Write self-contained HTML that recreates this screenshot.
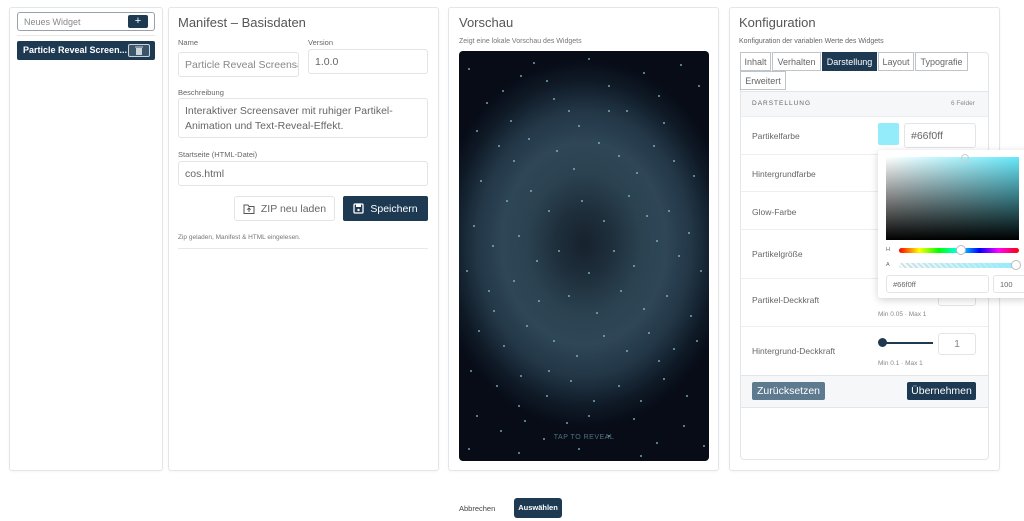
<!DOCTYPE html>
<html><head><meta charset="utf-8"><style>
*{box-sizing:border-box;margin:0;padding:0}
body{width:1024px;height:521px;background:#fff;font-family:"Liberation Sans",sans-serif;position:relative;overflow:hidden;color:#555}
.abs{position:absolute}
.panel{position:absolute;border:1px solid #e3e5e8;border-radius:3px;background:#fff;box-shadow:0 1px 2px rgba(0,0,0,.04)}
.h{font-size:13px;color:#555}
.lbl{font-size:7.5px;color:#666}
.inp{position:absolute;border:1px solid #e2e4e7;border-radius:3px;background:#fff;font-size:10.5px;color:#666;padding:0 6px;display:flex;align-items:center}
.dark{background:#1e3a53;color:#fff}
.tab{position:absolute;border:1px solid #bfc4c9;font-size:9px;color:#666;display:flex;align-items:center;justify-content:center;height:19px;background:#fff}
.row{position:absolute;left:741px;width:247px;border-top:1px solid #eceef0;font-size:8.5px;color:#666}
</style></head><body>

<!-- left panel -->
<div class="panel" style="left:9px;top:7px;width:154px;height:464px"></div>
<div class="inp" style="left:17px;top:12px;width:138px;height:19px;border-color:#9aa1a8;font-size:9px;color:#888">Neues Widget</div>
<div class="abs dark" style="left:128px;top:15px;width:20px;height:13px;border-radius:2px;font-size:11px;line-height:13px;text-align:center">+</div>
<div class="abs" style="left:17px;top:35px;width:138px;height:1px;background:#e6e8ea"></div>
<div class="abs dark" style="left:17px;top:41px;width:138px;height:19px;border-radius:2px;font-size:9px;font-weight:bold;line-height:19px;padding-left:6px">Particle Reveal Screen...</div>
<div class="abs" style="left:128px;top:44px;width:22px;height:13px;border:1px solid #c9d3dc;border-radius:2px;background:#3c5569;display:flex;align-items:center;justify-content:center"><svg width="8" height="9" viewBox="0 0 8 9" style="display:block"><rect x="1" y="2" width="6" height="7" fill="#c9d3dc"/><rect x="0" y="0.5" width="8" height="1" fill="#c9d3dc"/></svg></div>

<!-- manifest panel -->
<div class="panel" style="left:168px;top:7px;width:271px;height:464px"></div>
<div class="abs h" style="left:178px;top:15px">Manifest – Basisdaten</div>
<div class="abs lbl" style="left:178px;top:38px">Name</div>
<div class="abs lbl" style="left:308px;top:38px">Version</div>
<div class="inp" style="left:178px;top:52px;width:121px;height:25px;color:#888;overflow:hidden;white-space:nowrap">Particle Reveal Screensa</div>
<div class="inp" style="left:308px;top:49px;width:120px;height:25px">1.0.0</div>
<div class="abs lbl" style="left:178px;top:88px">Beschreibung</div>
<div class="inp" style="left:178px;top:98px;width:250px;height:40px;align-items:flex-start;padding-top:5px;line-height:15px">Interaktiver Screensaver mit ruhiger Partikel-Animation und Text-Reveal-Effekt.</div>
<div class="abs lbl" style="left:178px;top:150px">Startseite (HTML-Datei)</div>
<div class="inp" style="left:178px;top:161px;width:250px;height:25px">cos.html</div>
<div class="inp" style="left:234px;top:196px;width:101px;height:25px;justify-content:center;gap:6px;color:#666"><svg width="12" height="10" viewBox="0 0 12 10"><path d="M1 1h4l1 1.5h5v7H1z" fill="none" stroke="#555"/><path d="M6 8V4M4.3 5.7L6 4l1.7 1.7" fill="none" stroke="#555"/></svg>ZIP neu laden</div>
<div class="abs dark" style="left:343px;top:196px;width:85px;height:25px;border-radius:2px;font-size:10.5px;display:flex;align-items:center;justify-content:center;gap:6px"><svg width="11" height="11" viewBox="0 0 11 11"><rect x="1" y="1" width="9" height="9" rx="1" fill="none" stroke="#fff" stroke-width="1.3"/><rect x="3" y="1" width="5" height="3" fill="#fff"/><circle cx="5.5" cy="7" r="1.2" fill="#fff"/></svg>Speichern</div>
<div class="abs" style="left:178px;top:234px;font-size:6.5px;color:#777">Zip geladen, Manifest &amp; HTML eingelesen.</div>
<div class="abs" style="left:178px;top:248px;width:250px;height:1px;background:#e6e8ea"></div>

<!-- preview panel -->
<div class="panel" style="left:448px;top:7px;width:271px;height:464px"></div>
<div class="abs h" style="left:459px;top:15px">Vorschau</div>
<div class="abs" style="left:459px;top:38px;font-size:7px;color:#777">Zeigt eine lokale Vorschau des Widgets</div>
<div class="abs" style="left:459px;top:51px;width:250px;height:410px;border-radius:4px;overflow:hidden;background:radial-gradient(ellipse 150px 185px at 50% 47%,#16222e 0%,#1e2e3b 18%,#2b4251 38%,#2e4656 55%,#223646 72%,#0f1a26 88%,#070c17 100%)">
<svg width="250" height="410" style="position:absolute;left:0;top:0" fill="#8fcfd8">
<g>
<circle cx="10" cy="18" r=".9"/><circle cx="28" cy="52" r=".9"/><circle cx="44" cy="40" r=".9"/><circle cx="62" cy="25" r=".9"/><circle cx="75" cy="12" r=".9"/><circle cx="88" cy="30" r=".9"/><circle cx="95" cy="48" r=".9"/><circle cx="110" cy="60" r=".9"/><circle cx="130" cy="8" r=".9"/><circle cx="150" cy="35" r=".9"/><circle cx="168" cy="60" r=".9"/><circle cx="185" cy="22" r=".9"/><circle cx="200" cy="45" r=".9"/><circle cx="222" cy="14" r=".9"/><circle cx="240" cy="35" r=".9"/><circle cx="18" cy="80" r=".9"/><circle cx="40" cy="95" r=".9"/><circle cx="55" cy="110" r=".9"/><circle cx="70" cy="88" r=".9"/><circle cx="98" cy="100" r=".9"/><circle cx="115" cy="118" r=".9"/><circle cx="140" cy="92" r=".9"/><circle cx="160" cy="105" r=".9"/><circle cx="178" cy="122" r=".9"/><circle cx="195" cy="95" r=".9"/><circle cx="215" cy="110" r=".9"/><circle cx="235" cy="125" r=".9"/><circle cx="22" cy="130" r=".9"/><circle cx="48" cy="150" r=".9"/><circle cx="72" cy="140" r=".9"/><circle cx="90" cy="160" r=".9"/><circle cx="123" cy="150" r=".9"/><circle cx="145" cy="170" r=".9"/><circle cx="170" cy="145" r=".9"/><circle cx="188" cy="165" r=".9"/><circle cx="210" cy="160" r=".9"/><circle cx="230" cy="182" r=".9"/><circle cx="15" cy="175" r=".9"/><circle cx="34" cy="195" r=".9"/><circle cx="60" cy="185" r=".9"/><circle cx="78" cy="210" r=".9"/><circle cx="100" cy="200" r=".9"/><circle cx="130" cy="222" r=".9"/><circle cx="155" cy="200" r=".9"/><circle cx="175" cy="215" r=".9"/><circle cx="198" cy="190" r=".9"/><circle cx="220" cy="205" r=".9"/><circle cx="242" cy="220" r=".9"/><circle cx="8" cy="220" r=".9"/><circle cx="30" cy="240" r=".9"/><circle cx="55" cy="230" r=".9"/><circle cx="80" cy="250" r=".9"/><circle cx="110" cy="245" r=".9"/><circle cx="138" cy="262" r=".9"/><circle cx="162" cy="240" r=".9"/><circle cx="185" cy="258" r=".9"/><circle cx="208" cy="245" r=".9"/><circle cx="232" cy="265" r=".9"/><circle cx="20" cy="280" r=".9"/><circle cx="45" cy="295" r=".9"/><circle cx="68" cy="275" r=".9"/><circle cx="95" cy="290" r=".9"/><circle cx="118" cy="305" r=".9"/><circle cx="145" cy="285" r=".9"/><circle cx="168" cy="300" r=".9"/><circle cx="190" cy="282" r=".9"/><circle cx="215" cy="298" r=".9"/><circle cx="238" cy="290" r=".9"/><circle cx="12" cy="320" r=".9"/><circle cx="38" cy="335" r=".9"/><circle cx="62" cy="325" r=".9"/><circle cx="88" cy="345" r=".9"/><circle cx="112" cy="330" r=".9"/><circle cx="135" cy="350" r=".9"/><circle cx="160" cy="335" r=".9"/><circle cx="182" cy="350" r=".9"/><circle cx="205" cy="328" r=".9"/><circle cx="228" cy="345" r=".9"/><circle cx="18" cy="365" r=".9"/><circle cx="42" cy="380" r=".9"/><circle cx="66" cy="370" r=".9"/><circle cx="85" cy="388" r=".9"/><circle cx="108" cy="372" r=".9"/><circle cx="150" cy="385" r=".9"/><circle cx="175" cy="368" r=".9"/><circle cx="198" cy="392" r=".9"/><circle cx="225" cy="375" r=".9"/><circle cx="10" cy="398" r=".9"/><circle cx="60" cy="402" r=".9"/><circle cx="120" cy="398" r=".9"/><circle cx="182" cy="405" r=".9"/><circle cx="245" cy="395" r=".9"/>
<circle cx="52" cy="70" r=".9"/><circle cx="120" cy="75" r=".9"/><circle cx="205" cy="72" r=".9"/><circle cx="35" cy="260" r=".9"/><circle cx="90" cy="320" r=".9"/><circle cx="200" cy="310" r=".9"/><circle cx="150" cy="60" r=".9"/><circle cx="60" cy="355" r=".9"/><circle cx="130" cy="365" r=".9"/>
</g></svg>
<div class="abs" style="left:0;width:250px;top:383px;text-align:center;font-size:7px;letter-spacing:.5px;color:#4d7080">TAP TO REVEAL</div>
</div>

<!-- config panel -->
<div class="panel" style="left:729px;top:7px;width:271px;height:464px"></div>
<div class="abs h" style="left:739px;top:15px">Konfiguration</div>
<div class="abs" style="left:739px;top:38px;font-size:7px;color:#666">Konfiguration der variablen Werte des Widgets</div>
<div class="abs" style="left:740px;top:52px;width:249px;height:408px;border:1px solid #e3e5e8;border-radius:4px"></div>
<div class="tab" style="left:740px;top:52px;width:31px">Inhalt</div>
<div class="tab" style="left:772px;top:52px;width:49px">Verhalten</div>
<div class="tab" style="left:822px;top:52px;width:55px;background:#1e3a53;color:#fff;border-color:#1e3a53">Darstellung</div>
<div class="tab" style="left:878px;top:52px;width:36px">Layout</div>
<div class="tab" style="left:915px;top:52px;width:53px">Typografie</div>
<div class="tab" style="left:740px;top:71px;width:46px">Erweitert</div>
<div class="abs" style="left:741px;top:91px;width:247px;height:25px;background:#f5f7f9;border-top:1px solid #e3e5e8"></div>
<div class="abs" style="left:752px;top:100px;font-size:6.5px;letter-spacing:1px;color:#666">DARSTELLUNG</div>
<div class="abs" style="left:951px;top:100px;font-size:6.5px;color:#888">6 Felder</div>
<div class="row" style="top:116px;height:38px"><span class="abs" style="left:11px;top:14px">Partikelfarbe</span></div>
<div class="abs" style="left:878px;top:123px;width:21px;height:22px;background:#94ecfb;border-radius:2px"></div>
<div class="inp" style="left:904px;top:123px;width:72px;height:25px">#66f0ff</div>
<div class="row" style="top:154px;height:37px"><span class="abs" style="left:11px;top:14px">Hintergrundfarbe</span></div>
<div class="row" style="top:191px;height:38px"><span class="abs" style="left:11px;top:15px">Glow-Farbe</span></div>
<div class="row" style="top:229px;height:49px"><span class="abs" style="left:11px;top:19px">Partikelgröße</span></div>
<div class="row" style="top:278px;height:48px"><span class="abs" style="left:11px;top:16px">Partikel-Deckkraft</span></div>
<div class="abs" style="left:938px;top:282px;width:38px;height:24px;border:1px solid #e2e4e7;border-radius:3px"></div>
<div class="abs" style="left:878px;top:311px;font-size:6.5px;color:#888">Min 0.05 · Max 1</div>
<div class="row" style="top:326px;height:49px"><span class="abs" style="left:11px;top:19px">Hintergrund-Deckkraft</span></div>
<div class="abs" style="left:882px;top:342px;width:51px;height:2px;background:#1e3a53"></div>
<div class="abs" style="left:878px;top:338px;width:9px;height:9px;border-radius:50%;background:#1e3a53"></div>
<div class="inp" style="left:938px;top:333px;width:38px;height:22px;justify-content:center;color:#888">1</div>
<div class="abs" style="left:878px;top:360px;font-size:6.5px;color:#888">Min 0.1 · Max 1</div>
<div class="abs" style="left:741px;top:375px;width:247px;height:33px;background:#f5f7f9;border-top:1px solid #e3e5e8;border-bottom:1px solid #e3e5e8"></div>
<div class="abs" style="left:752px;top:382px;width:73px;height:18px;background:#5d7a8f;color:#fff;border-radius:2px;font-size:10.5px;line-height:18px;text-align:center">Zurücksetzen</div>
<div class="abs dark" style="left:907px;top:382px;width:69px;height:18px;border-radius:2px;font-size:10.5px;line-height:18px;text-align:center">Übernehmen</div>

<!-- color picker -->
<div class="abs" style="left:878px;top:150px;width:150px;height:148px;background:#fff;border-radius:3px;box-shadow:0 2px 8px rgba(0,0,0,.18)"></div>
<div class="abs" style="left:886px;top:157px;width:133px;height:83px;background:linear-gradient(to top,#000,transparent),linear-gradient(to right,#fff,#66e8fa)"></div>
<div class="abs" style="left:961px;top:154px;width:8px;height:8px;border-radius:50%;border:1px solid #ccc"></div>
<div class="abs" style="left:886px;top:247px;font-size:5.5px;color:#666">H</div>
<div class="abs" style="left:899px;top:248px;width:120px;height:5px;border-radius:3px;background:linear-gradient(to right,#f00,#ff0 17%,#0f0 33%,#0ff 50%,#00f 67%,#f0f 83%,#f00)"></div>
<div class="abs" style="left:956px;top:245px;width:10px;height:10px;border-radius:50%;background:#fff;border:1px solid #bbb"></div>
<div class="abs" style="left:886px;top:262px;font-size:5.5px;color:#666">A</div>
<div class="abs" style="left:899px;top:263px;width:120px;height:5px;border-radius:3px;background:linear-gradient(to right,rgba(148,236,251,0.1),#94ecfb),repeating-linear-gradient(45deg,#ddd 0 2px,#fff 2px 4px)"></div>
<div class="abs" style="left:1011px;top:260px;width:10px;height:10px;border-radius:50%;background:#fff;border:1px solid #bbb"></div>
<div class="inp" style="left:886px;top:275px;width:103px;height:18px;font-size:7.5px">#66f0ff</div>
<div class="inp" style="left:993px;top:275px;width:35px;height:18px;font-size:7.5px">100</div>

<!-- bottom -->
<div class="abs" style="left:459px;top:504px;font-size:7.5px;color:#444">Abbrechen</div>
<div class="abs dark" style="left:514px;top:498px;width:48px;height:20px;border-radius:3px;font-size:7.5px;font-weight:bold;line-height:20px;text-align:center">Auswählen</div>
</body></html>
